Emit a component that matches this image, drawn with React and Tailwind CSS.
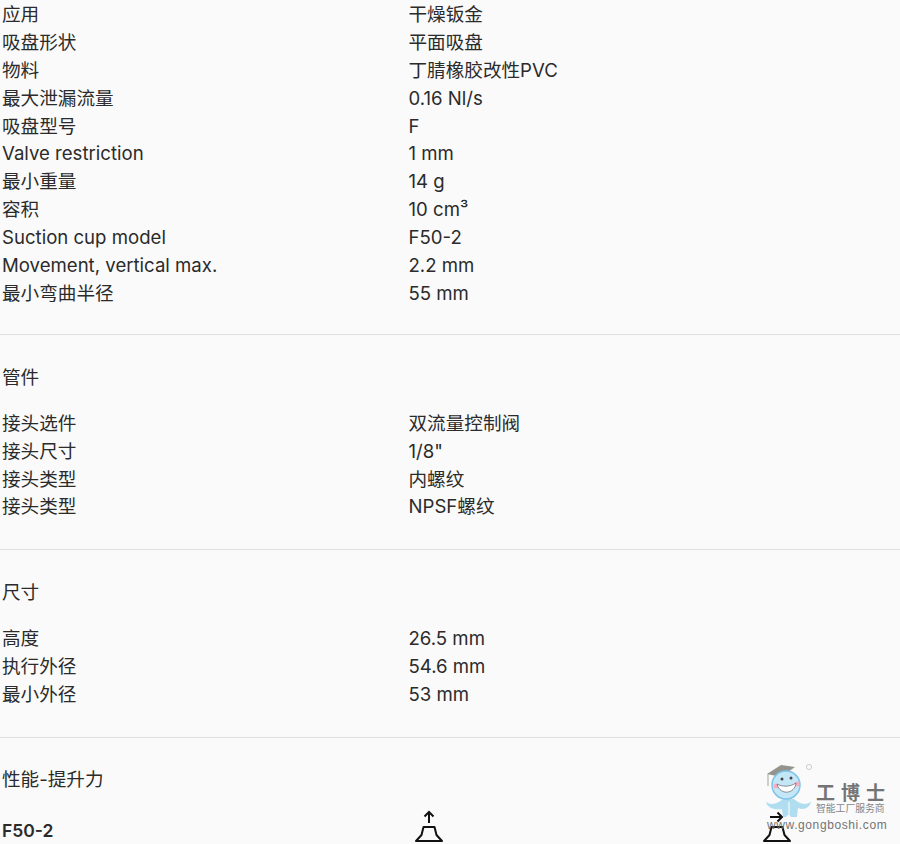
const sections = [
  {
    pad: "pb-[27px]",
    rows: [
      ["应用", "干燥钣金"],
      ["吸盘形状", "平面吸盘"],
      ["物料", "丁腈橡胶改性PVC"],
      ["最大泄漏流量", "0.16 Nl/s"],
      ["吸盘型号", "F"],
      ["Valve restriction", "1 mm"],
      ["最小重量", "14 g"],
      ["容积", "10 cm³"],
      ["Suction cup model", "F50-2"],
      ["Movement, vertical max.", "2.2 mm"],
      ["最小弯曲半径", "55 mm"],
    ],
  },
  {
    title: "管件",
    pad: "pb-[28.6px]",
    rows: [
      ["接头选件", "双流量控制阀"],
      ["接头尺寸", '1/8"'],
      ["接头类型", "内螺纹"],
      ["接头类型", "NPSF螺纹"],
    ],
  },
  {
    title: "尺寸",
    pad: "pt-[0.4px] pb-[28.5px]",
    rows: [
      ["高度", "26.5 mm"],
      ["执行外径", "54.6 mm"],
      ["最小外径", "53 mm"],
    ],
  },
];

function Row({ label, value }) {
  return (
    <div className="flex h-[27.9px] items-center pt-[2px]">
      <div className="w-[406.5px]">{label}</div>
      <div>{value}</div>
    </div>
  );
}

function CupIcon({ side }) {
  return (
    <svg width="30" height="34" viewBox="0 0 30 34" fill="none" stroke="#111" strokeWidth="2">
      {side ? (
        <path d="M8 7H20M15.5 2.5L20 7L15.5 11.5" />
      ) : (
        <path d="M15 13V2M10.5 6.5L15 2L19.5 6.5" />
      )}
      <path d="M9.5 17H20.5L22.5 25L28 31H2L7.5 25Z" strokeLinejoin="round" />
    </svg>
  );
}

function Watermark() {
  return (
    <div className="absolute left-[764px] top-[762px] w-[124px] h-[72px] opacity-90">
      <svg className="absolute left-0 top-0" width="54" height="60" viewBox="0 0 54 60">
        {/* mascot */}
        <path d="M3 12L17 3L31 5L17 15Z" fill="#8a8a84" />
        <path d="M4 12V24" stroke="#9a9a94" strokeWidth="1" />
        <path d="M2 40C8 44 14 41 19 37L30 37C35 41 40 44 47 40C45 47 39 48 34 46L33 55H27L25 52L22 55H19L18 47C12 48 4 47 2 40Z" fill="#a9dcf0" />
        <path d="M25 40V52" stroke="#fff" strokeWidth="1" />
        <circle cx="22" cy="23" r="14" fill="#bfe6f8" stroke="#72bfe6" strokeWidth="1.5" />
        <circle cx="12" cy="24" r="2.5" fill="#f3a6c0" />
        <circle cx="33" cy="22" r="2.5" fill="#f3a6c0" />
        <path d="M13 22C18 25 26 25 32 21C31 32 16 34 13 22Z" fill="#fff" stroke="#555" strokeWidth="0.7" />
        <circle cx="18" cy="17" r="1.5" fill="#333" />
        <circle cx="27" cy="16" r="1.5" fill="#333" />
        <circle cx="45" cy="5" r="2.6" fill="none" stroke="#aaa" strokeWidth="0.6" />
      </svg>
      <div className="absolute left-[52px] top-[20px] text-[19px] leading-[19px] h-[19px] font-bold tracking-[6px] text-[#666] font-['Noto_Sans_CJK_SC',sans-serif] whitespace-nowrap">
        工博士
      </div>
      <div className="absolute left-[52px] top-[41px] text-[9.8px] leading-[11px] h-[11px] text-[#777] font-['Noto_Sans_CJK_SC',sans-serif] whitespace-nowrap">
        智能工厂服务商
      </div>
      <div className="absolute left-[3px] top-[56px] text-[12px] leading-[14px] tracking-[0.6px] text-[#666] font-['Liberation_Sans',sans-serif] whitespace-nowrap">
        www.gongboshi.com
      </div>
    </div>
  );
}

export default function App() {
  return (
    <div className="relative h-[844px] overflow-hidden bg-[#fafafa] pl-[2px] text-[18.6px] text-[#2b2b2b] font-['Inter','Noto_Sans_CJK_SC',sans-serif]">
      {sections.map((s, i) => (
        <div key={i} className={`-ml-[2px] pl-[2px] border-b border-[#dfe0e3] mb-[28px] ${s.pad}`}>
          {s.title && <div className="h-[28px] flex items-center pt-[2px] mb-[18px]">{s.title}</div>}
          {s.rows.map((r, j) => (
            <Row key={j} label={r[0]} value={r[1]} />
          ))}
        </div>
      ))}
      <div className="h-[28px] flex items-center mb-[23px]">性能-提升力</div>
      <div className="flex h-[28px] items-center">
        <div className="w-[412px] pt-[2px] text-[17.5px] font-semibold">F50-2</div>
        <div className="w-[348px] pb-[8px]"><CupIcon /></div>
        <div className="pb-[8px]"><CupIcon side /></div>
      </div>
      <Watermark />
    </div>
  );
}
